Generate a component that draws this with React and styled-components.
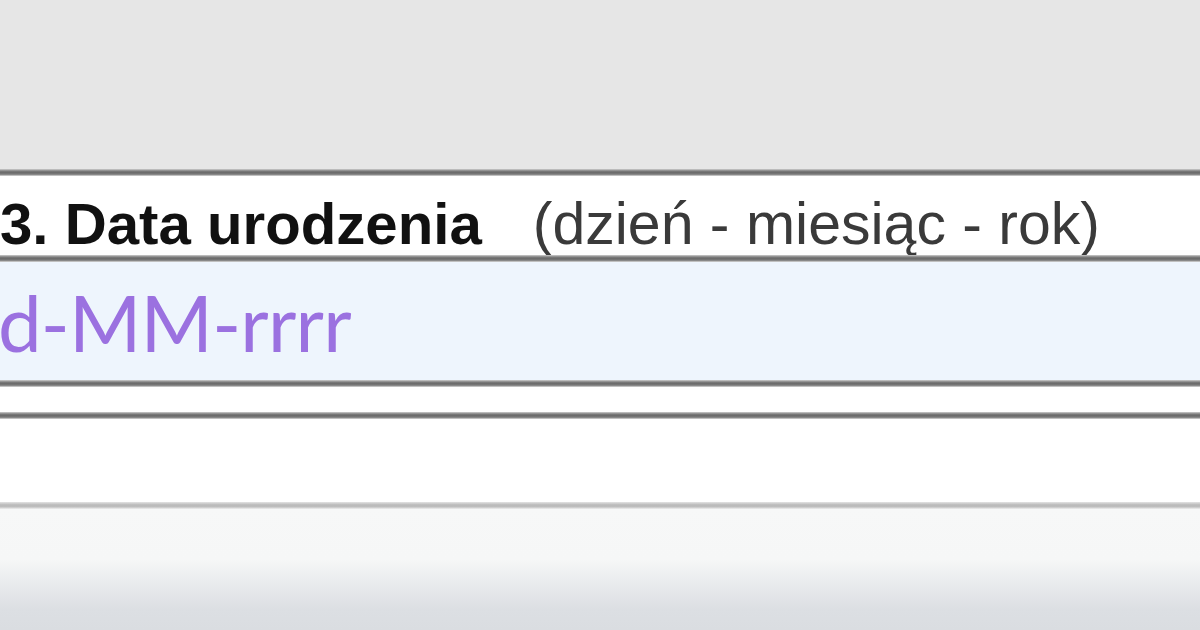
import React from "react";
import styled, { createGlobalStyle } from "styled-components";

const GlobalStyle = createGlobalStyle`
    html, body {
        margin: 0;
        padding: 0;
        background: #ffffff;
        overflow: hidden;
    }
`;

const Page = styled.div`
    width: 1200px;
    height: 630px;
    display: flex;
    flex-direction: column;
    overflow: hidden;
    font-family: "Liberation Sans", Arial, sans-serif;
`;

const TopBand = styled.div`
    height: 169px;
    background-color: #e6e6e6;
    flex-shrink: 0;
`;

const Rule = styled.div`
    height: 7px;
    flex-shrink: 0;
    background: ${(p) =>
        p.$light
            ? "linear-gradient(to bottom, #e4e4e4, #c0c0c0 35%, #b8b8b8 60%, #d6d6d6 85%, #f2f2f2)"
            : "linear-gradient(to bottom, #cfcfcf, #7c7c7c 30%, #686868 55%, #8a8a8a 80%, #dedede)"};
`;

const LabelRow = styled.div`
    height: 79px;
    display: flex;
    align-items: flex-end;
    background-color: #ffffff;
    white-space: nowrap;
    flex-shrink: 0;
`;

const Label = styled.span`
    font-size: 58.2px;
    line-height: 1.04;
    font-weight: 700;
    color: #111111;
`;

const Hint = styled.span`
    font-size: 59px;
    line-height: 1.04;
    font-weight: 400;
    color: #3a3a3a;
    margin-left: 51px;
`;

const InputRow = styled.div`
    height: 118px;
    background-color: #eef5fd;
    flex-shrink: 0;
    overflow: hidden;
`;

const DateInput = styled.input`
    display: block;
    width: 1300px;
    margin-left: -45px;
    padding: 14px 0 0;
    border: none;
    outline: none;
    background: transparent;
    font-family: Lato, "Open Sans", sans-serif;
    font-size: 78px;
    letter-spacing: -0.8px;
    line-height: 1.2;
    color: #222;

    &::placeholder {
        color: #9b71e0;
        opacity: 1;
    }
`;

const Gap = styled.div`
    height: ${(p) => p.$h}px;
    background-color: #ffffff;
    flex-shrink: 0;
`;

const Footer = styled.div`
    flex: 1;
    background: linear-gradient(to bottom, #f7f8f8 0px, #f6f7f7 50px, #e6e8eb 80px, #dcdfe3 100px, #dadde1 120px);
`;

const App = () => {
    return (
        <>
            <GlobalStyle />
            <Page>
                <TopBand />
                <Rule />
                <LabelRow>
                    <Label>3. Data urodzenia</Label>
                    <Hint>(dzień - miesiąc - rok)</Hint>
                </LabelRow>
                <Rule />
                <InputRow>
                    <DateInput type="text" name="data_urodzenia" placeholder="dd-MM-rrrr" />
                </InputRow>
                <Rule />
                <Gap $h={25} />
                <Rule />
                <Gap $h={83} />
                <Rule $light />
                <Footer />
            </Page>
        </>
    );
};

export default App;
